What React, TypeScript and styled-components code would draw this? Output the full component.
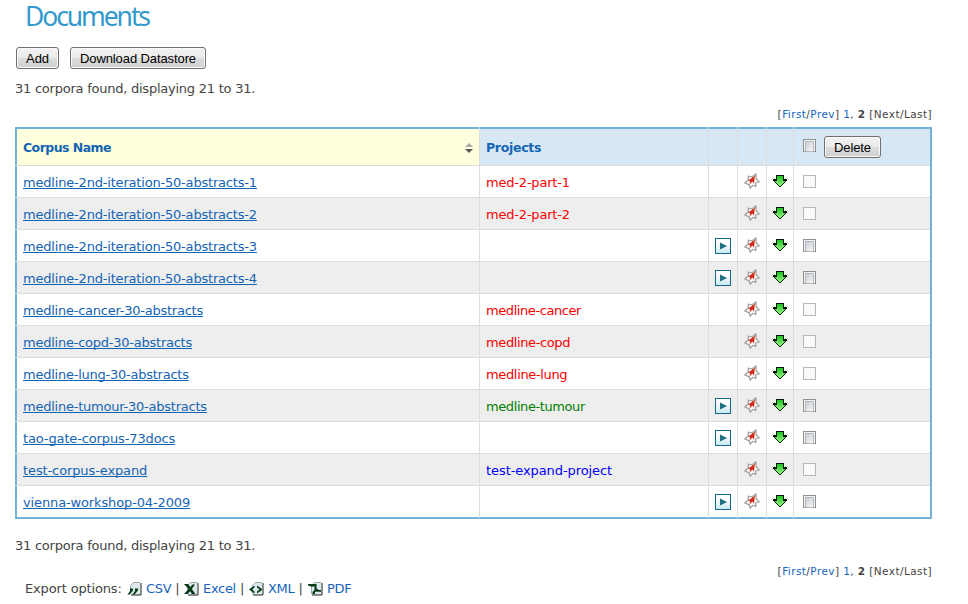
import React from 'react';
import styled, { createGlobalStyle } from 'styled-components';

const Global = createGlobalStyle`
  * { box-sizing: border-box; }
  html, body { margin: 0; background: #fff; }
  body { font-family: "DejaVu Sans", Verdana, sans-serif; font-size: 13px; color: #444; }
`;

const Page = styled.main`
  width: 968px;
  height: 604px;
  padding: 0 36px 0 15px;
`;

const Title = styled.h1`
  margin: 0;
  padding-left: 10px;
  height: 47px;
  font: 400 26.5px/32px "Noto Sans", Tahoma, sans-serif;
  letter-spacing: -2.1px;
  color: #3399cc;
`;

const Toolbar = styled.div`
  display: flex;
  gap: 11px;
  padding-left: 1px;
  height: 22px;
`;

const Button = styled.button<{ $width: number }>`
  width: ${(p) => p.$width}px;
  height: 22px;
  padding: 1px 0 0;
  border: 1px solid #707070;
  border-radius: 3px;
  background: linear-gradient(#f2f2f2 0%, #ebebeb 48%, #dddddd 52%, #cfcfcf 100%);
  box-shadow: inset 0 0 0 1px #fafafa;
  font: 400 13px/19px "Liberation Sans", Arial, sans-serif;
  letter-spacing: -0.1px;
  color: #000;
  white-space: nowrap;
`;

const Summary = styled.p<{ $top: number }>`
  margin: ${(p) => p.$top}px 0 0;
  height: 16px;
  line-height: 16px;
  letter-spacing: -0.24px;
  white-space: nowrap;
`;

const Pager = styled.nav`
  display: flex;
  justify-content: flex-end;
  margin-top: 10px;
  height: 14px;
  font-size: 10.5px;
  line-height: 14px;
  letter-spacing: 0.42px;
  white-space: pre;
`;

const Link = styled.a`
  color: #1464c0;
  text-decoration: none;
`;

const Table = styled.div`
  margin-top: 6px;
  border: solid #73b2d9;
  border-width: 0 2px 1px 0;
`;

const Cell = styled.div`
  display: flex;
  align-items: center;
  padding: 2px 0 0 6px;
  border-right: 1px solid #dcdcdc;
  white-space: nowrap;
  &:first-child {
    padding-left: 8px;
    box-shadow: inset 2px 0 #73b2d9;
  }
  &:last-child { border-right: 0; }
`;

const Row = styled.div<{ $shade?: boolean }>`
  display: grid;
  grid-template-columns: 465px 229px 29px 29px 27px 136px;
  height: 32px;
  border-bottom: 1px solid #dcdcdc;
  background: ${(p) => (p.$shade ? '#eeeeee' : '#ffffff')};
  &:last-child {
    border-bottom: 0;
    ${Cell} { box-shadow: inset 0 -1px #73b2d9; padding-bottom: 1px; }
    ${Cell}:first-child { box-shadow: inset 2px -1px #73b2d9; }
  }
`;

const HeadRow = styled(Row)`
  height: 39px;
  background: #d7e8f4;
`;

const HeadCell = styled(Cell)<{ $sorted?: boolean; $track?: number }>`
  justify-content: space-between;
  padding-right: 6px;
  padding-top: 3px;
  font-weight: 700;
  font-size: 12.5px;
  letter-spacing: ${(p) => p.$track ?? 0}px;
  color: #1464b4;
  background: ${(p) => (p.$sorted ? '#ffffdd' : 'transparent')};
  box-shadow: inset 0 2px #73b2d9;
  &:first-child { box-shadow: inset 2px 2px #73b2d9; }
`;

const IconCell = styled(Cell)`
  align-items: flex-start;
  padding-top: 0;
`;

const CheckCell = styled(Cell)`
  align-items: flex-start;
  padding: 9px 0 0 9px;
`;

const HeadCheckCell = styled(CheckCell)`
  gap: 8px;
  padding-top: 9px;
  box-shadow: inset 0 2px #73b2d9;
`;

const CorpusLink = styled.a<{ $track: number }>`
  color: #1464b4;
  text-decoration: underline;
  text-underline-offset: 1px;
  text-decoration-thickness: 1px;
  text-decoration-skip-ink: none;
  letter-spacing: ${(p) => p.$track}px;
`;

const Project = styled.span<{ $color: string; $track: number }>`
  color: ${(p) => p.$color};
  letter-spacing: ${(p) => p.$track}px;
`;

const Box = styled.span<{ $disabled?: boolean; $top?: number }>`
  width: 13px;
  height: 13px;
  margin-top: ${(p) => p.$top ?? 0}px;
  border: 1px solid ${(p) => (p.$disabled ? '#b8b8b8' : '#8e8f8f')};
  padding: 1px;
  background: ${(p) => (p.$disabled ? '#f8f8f8' : '#f4f4f4')};
  &::before {
    content: '';
    display: block;
    height: 9px;
    border: ${(p) => (p.$disabled ? '0' : '1px solid #b4b8be')};
    background: ${(p) => (p.$disabled ? '#fafafa' : 'linear-gradient(135deg, #cbcfd5, #f6f6f6)')};
  }
`;

const Exports = styled.div`
  display: flex;
  align-items: center;
  margin-top: 3px;
  padding-left: 10px;
  height: 16px;
  line-height: 16px;
  white-space: nowrap;
`;

const ExportLabel = styled.span`
  width: 102px;
  letter-spacing: -0.15px;
`;

const ExportItem = styled.span<{ $width: number }>`
  display: flex;
  align-items: center;
  gap: 4px;
  width: ${(p) => p.$width}px;
  ${Link} { flex: 1; letter-spacing: -0.3px; }
`;

const Pipe = styled.span`
  width: 10px;
`;

const Glyph = styled.svg<{ $top?: number }>`
  display: block;
  flex: none;
  margin-top: ${(p) => p.$top ?? 0}px;
`;

const SortIcon = () => (
  <Glyph width="8" height="10" viewBox="0 0 8 10">
    <path d="M0 4 4 0 8 4z" fill="#aaa" />
    <path d="M0 6h8L4 10z" fill="#555" />
  </Glyph>
);

const PlayIcon = () => (
  <Glyph $top={8} width="16" height="16" viewBox="0 0 16 16">
    <defs>
      <linearGradient id="play" x1="0" y1="0" x2="0" y2="1">
        <stop offset=".3" stopColor="#fff" />
        <stop offset="1" stopColor="#c6e6f2" />
      </linearGradient>
    </defs>
    <rect x=".5" y=".5" width="15" height="15" fill="url(#play)" stroke="#14698a" />
    <path d="M5 4.500 12 8 5 11.500z" fill="#1d6f80" />
  </Glyph>
);

const StarIcon = () => (
  <Glyph $top={7} width="16" height="16" viewBox="0 0 16 16">
    <path d="M12 .8 11.900 5.300 15.200 8.800 11.300 10.300 12 13.500 8.700 12.300 6.300 15.200 4.900 11.600 .8 10 4.300 7 4.300 3 8 4z" fill="#fff" stroke="#9a9a9a" strokeWidth="1.200" strokeLinejoin="round" />
    <path d="M10.800 2.800 10 10.500 8.300 8.500 5.300 12 6.300 8.300 3.800 8z" fill="#cf2a10" />
  </Glyph>
);

const DownIcon = () => (
  <Glyph $top={9} width="14" height="12" viewBox="0 0 14 12" shapeRendering="crispEdges">
    <defs>
      <linearGradient id="down" x1="0" y1="0" x2="0" y2="1">
        <stop offset="0" stopColor="#20c020" />
        <stop offset="1" stopColor="#90f880" />
      </linearGradient>
    </defs>
    <path d="M3 0h8v4h3v2h-1v1h-1v1h-1v1h-1v1H9v1H8v1H6v-1H5v-1H4V9H3V8H2V7H1V6H0V4h3z" fill="#061806" />
    <path d="M4 1h6v5h2v1h-1v1h-1v1H9v1H8v1H6v-1H5V9H4V8H3V7H2V6h2z" fill="url(#down)" />
  </Glyph>
);

const fileMarks: Record<string, React.ReactNode> = {
  CSV: <path d="M3 6.500h3v2L2.500 12.500H.5L3 9zM8 6.500h3v2l-3.500 4h-2L8 9z" />,
  Excel: <path d="M0 2h4l2.300 3L8.500 2.500h2.500L7.800 7l3.700 5H8L6 9.200 3.500 12H0l4.500-5z" />,
  XML: <path d="M5.500 3.500v2L3 7.500l2.500 2v2L.5 8V7zM8 3.500v2l2.500 2-2.500 2v2L13 8V7z" />,
  PDF: <path d="M0 2h8.500v4.500L11 8h2v1.800H7V12H4.500v-2l2-2V4.500H3L0 3.500z" />,
};

const FileIcon = ({ kind }: { kind: string }) => (
  <Glyph width="15" height="14" viewBox="0 0 15 14">
    <path d="M6.500 1h7v12h-10V4z" fill="#dbe8ec" />
    <path d="M3.500 12V3.500L6.500.500H13" fill="none" stroke="#9aa9ae" />
    <path d="M4 13h10V1" fill="none" stroke="#222" />
    <g fill="#063b16">{fileMarks[kind]}</g>
  </Glyph>
);

type Corpus = {
  name: string;
  track: number;
  project?: string;
  color?: string;
  projectTrack?: number;
  playable?: boolean;
};

const corpora: Corpus[] = [
  { name: 'medline-2nd-iteration-50-abstracts-1', track: -0.19, project: 'med-2-part-1', color: '#f00', projectTrack: -0.2 },
  { name: 'medline-2nd-iteration-50-abstracts-2', track: -0.19, project: 'med-2-part-2', color: '#f00', projectTrack: -0.2 },
  { name: 'medline-2nd-iteration-50-abstracts-3', track: -0.19, playable: true },
  { name: 'medline-2nd-iteration-50-abstracts-4', track: -0.19, playable: true },
  { name: 'medline-cancer-30-abstracts', track: -0.24, project: 'medline-cancer', color: '#f00', projectTrack: -0.42 },
  { name: 'medline-copd-30-abstracts', track: -0.24, project: 'medline-copd', color: '#f00', projectTrack: -0.38 },
  { name: 'medline-lung-30-abstracts', track: -0.24, project: 'medline-lung', color: '#f00', projectTrack: -0.35 },
  { name: 'medline-tumour-30-abstracts', track: -0.23, project: 'medline-tumour', color: '#008000', projectTrack: -0.41, playable: true },
  { name: 'tao-gate-corpus-73docs', track: -0.13, playable: true },
  { name: 'test-corpus-expand', track: -0.11, project: 'test-expand-project', color: '#00f', projectTrack: -0.08 },
  { name: 'vienna-workshop-04-2009', track: -0.13, playable: true },
];

const exportsList = [
  { kind: 'CSV', width: 57 },
  { kind: 'Excel', width: 65 },
  { kind: 'XML', width: 59 },
  { kind: 'PDF', width: 60 },
];

const Pages = () => (
  <Pager>
    [<Link>First</Link>/<Link>Prev</Link>] <Link>1</Link>, <b>2</b> [Next/Last]
  </Pager>
);

export default function App() {
  return (
    <Page>
      <Global />
      <Title>Documents</Title>
      <Toolbar>
        <Button $width={43}>Add</Button>
        <Button $width={136}>Download Datastore</Button>
      </Toolbar>
      <Summary $top={12}>31 corpora found, displaying 21 to 31.</Summary>
      <Pages />
      <Table>
        <HeadRow>
          <HeadCell $sorted $track={-0.55}>Corpus Name<SortIcon /></HeadCell>
          <HeadCell $track={-0.3}>Projects</HeadCell>
          <HeadCell />
          <HeadCell />
          <HeadCell />
          <HeadCheckCell>
            <Box $top={3} />
            <Button $width={57}>Delete</Button>
          </HeadCheckCell>
        </HeadRow>
        {corpora.map((c, i) => (
          <Row key={c.name} $shade={i % 2 === 1}>
            <Cell><CorpusLink $track={c.track}>{c.name}</CorpusLink></Cell>
            <Cell>{c.project && <Project $color={c.color!} $track={c.projectTrack!}>{c.project}</Project>}</Cell>
            <IconCell>{c.playable && <PlayIcon />}</IconCell>
            <IconCell><StarIcon /></IconCell>
            <IconCell><DownIcon /></IconCell>
            <CheckCell><Box $disabled={!c.playable} /></CheckCell>
          </Row>
        ))}
      </Table>
      <Summary $top={19}>31 corpora found, displaying 21 to 31.</Summary>
      <Pages />
      <Exports>
        <ExportLabel>Export options:</ExportLabel>
        {exportsList.map((e, i) => (
          <ExportItem key={e.kind} $width={e.width}>
            <FileIcon kind={e.kind} />
            <Link>{e.kind}</Link>
            {i < exportsList.length - 1 && <Pipe>|</Pipe>}
          </ExportItem>
        ))}
      </Exports>
    </Page>
  );
}
